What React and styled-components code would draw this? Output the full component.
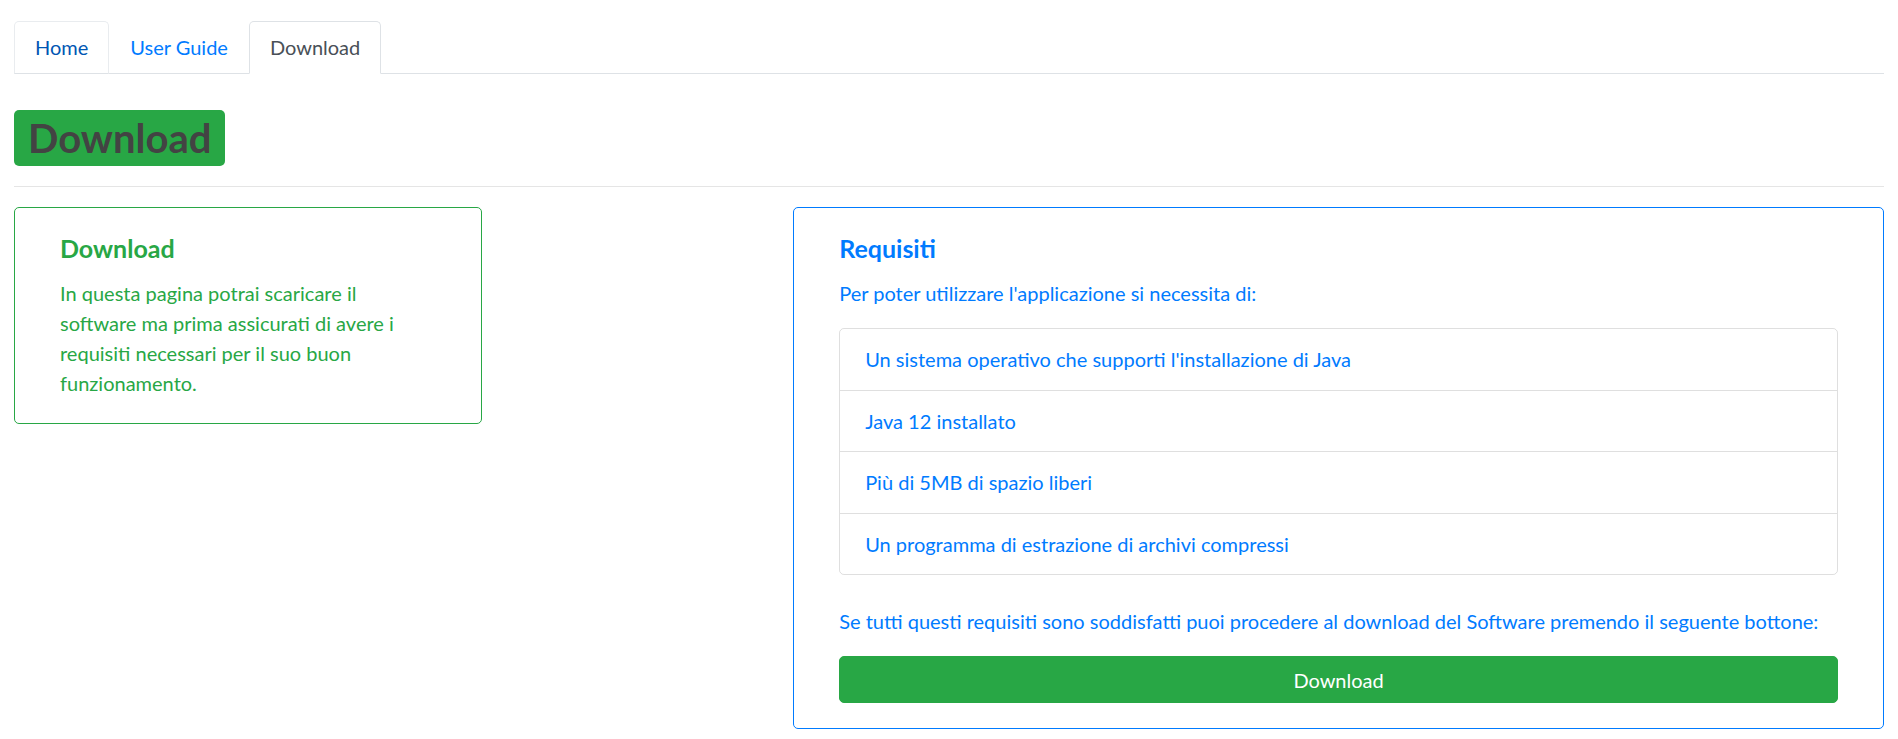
import React from "react";
import styled, { createGlobalStyle, css } from "styled-components";

const GlobalStyle = createGlobalStyle`
  * { box-sizing: border-box; }
  body {
    margin: 0;
    background: #fff;
    font-family: Lato, "Open Sans", sans-serif;
    font-size: 20px;
    line-height: 30px;
    color: #212529;
  }
`;

const Page = styled.div`
  padding: 21px 14px 0;
`;

const Tabs = styled.nav`
  display: flex;
  border-bottom: 1px solid #dee2e6;
`;

const tabStates = {
  hover: css`
    color: #0056b3;
    border-color: #e9ecef #e9ecef #dee2e6;
  `,
  normal: css`
    color: #007bff;
  `,
  active: css`
    color: #495057;
    background: #fff;
    border-color: #dee2e6 #dee2e6 #fff;
  `,
};

const Tab = styled.a`
  display: block;
  padding: 10px 20px 11px;
  margin-bottom: -1px;
  border: 1px solid transparent;
  border-radius: 5px 5px 0 0;
  font-size: 20px;
  line-height: 30px;
  text-decoration: none;
  cursor: pointer;
  ${(p) => tabStates[p.$state]}
`;

const Heading = styled.h1`
  margin: 36px 0 0;
  font-size: 40px;
  line-height: 48px;
  font-weight: 700;
`;

const HeadingBadge = styled.span`
  display: inline-block;
  padding: 4px 14px;
  background: #28a745;
  color: #434343;
  border-radius: 5px;
`;

const Divider = styled.hr`
  margin: 20px 0;
  border: 0;
  border-top: 1px solid rgba(0, 0, 0, 0.1);
`;

const Grid = styled.div`
  display: grid;
  grid-template-columns: repeat(12, 1fr);
  align-items: start;
`;

const Card = styled.section`
  grid-column: ${(p) => p.$start} / span ${(p) => p.$span};
  border: 1px solid ${(p) => p.$color};
  border-radius: 5px;
  padding: 25px 45px;
  color: ${(p) => p.$color};
`;

const CardTitle = styled.h5`
  margin: 0 0 15px;
  font-size: 25px;
  line-height: 30px;
  font-weight: 700;
`;

const Text = styled.p`
  margin: 0 0 20px;
  font-size: 20px;
  line-height: 30px;
  &:last-child {
    margin-bottom: 0;
  }
`;

const List = styled.ul`
  list-style: none;
  margin: 0 0 31px;
  padding: 0;
  border: 1px solid rgba(0, 0, 0, 0.125);
  border-radius: 5px;
`;

const Item = styled.li`
  padding: 15.25px 25px;
  line-height: 30px;
  & + & {
    border-top: 1px solid rgba(0, 0, 0, 0.125);
  }
`;

const Button = styled.button`
  display: block;
  width: 100%;
  padding: 7.5px 15px;
  border: 1px solid #28a745;
  border-radius: 5px;
  background: #28a745;
  color: #fff;
  font-family: inherit;
  font-size: 20px;
  line-height: 30px;
  cursor: pointer;
`;

const requirements = [
  "Un sistema operativo che supporti l'installazione di Java",
  "Java 12 installato",
  "Più di 5MB di spazio liberi",
  "Un programma di estrazione di archivi compressi",
];

export default function App() {
  return (
    <>
      <GlobalStyle />
      <Page>
        <Tabs>
          <Tab $state="hover">Home</Tab>
          <Tab $state="normal">User Guide</Tab>
          <Tab $state="active">Download</Tab>
        </Tabs>
        <Heading>
          <HeadingBadge>Download</HeadingBadge>
        </Heading>
        <Divider />
        <Grid>
          <Card $start={1} $span={3} $color="#28a745">
            <CardTitle>Download</CardTitle>
            <Text>
              In questa pagina potrai scaricare il software ma prima assicurati di avere i
              requisiti necessari per il suo buon funzionamento.
            </Text>
          </Card>
          <Card $start={6} $span={7} $color="#007bff">
            <CardTitle>Requisiti</CardTitle>
            <Text>Per poter utilizzare l'applicazione si necessita di:</Text>
            <List>
              {requirements.map((r) => (
                <Item key={r}>{r}</Item>
              ))}
            </List>
            <Text>
              Se tutti questi requisiti sono soddisfatti puoi procedere al download del
              Software premendo il seguente bottone:
            </Text>
            <Button>Download</Button>
          </Card>
        </Grid>
      </Page>
    </>
  );
}
